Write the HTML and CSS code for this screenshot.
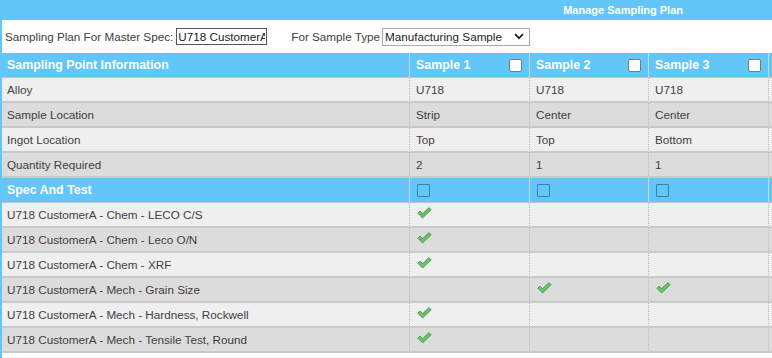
FILE: index.html
```html
<!DOCTYPE html>
<html lang="en">
<head>
    <meta charset="UTF-8">
    <meta name="viewport" content="width=device-width, initial-scale=1.0">
    <title>Manage Sampling Plan</title>
    <link rel="stylesheet" href="styles.css">
</head>
<body>
    <div class="title-bar">Manage Sampling Plan</div>

    <div class="page">
        <div class="filter-row">
            <label for="master-spec">Sampling Plan For Master Spec:</label>
            <input type="text" id="master-spec" value="U718 CustomerA">
            <label for="sample-type" class="type-label">For Sample Type</label>
            <div class="select-box" id="sample-type">
                <span>Manufacturing Sample</span>
                <svg width="10" height="7" viewBox="0 0 10 7"><path d="M1 1.2 L5 5.2 L9 1.2" fill="none" stroke="#222" stroke-width="1.8"/></svg>
            </div>
        </div>

        <table class="grid">
            <tr class="head">
                <th class="first">Sampling Point Information</th>
                <th><div class="head-cell">Sample 1 <span class="box"></span></div></th>
                <th><div class="head-cell">Sample 2 <span class="box"></span></div></th>
                <th><div class="head-cell">Sample 3 <span class="box"></span></div></th>
                <th class="extra"></th>
            </tr>
            <tr class="odd"><td class="first">Alloy</td><td>U718</td><td>U718</td><td>U718</td><td></td></tr>
            <tr class="even"><td class="first">Sample Location</td><td>Strip</td><td>Center</td><td>Center</td><td></td></tr>
            <tr class="odd"><td class="first">Ingot Location</td><td>Top</td><td>Top</td><td>Bottom</td><td></td></tr>
            <tr class="even"><td class="first">Quantity Required</td><td>2</td><td>1</td><td>1</td><td></td></tr>

            <tr class="head">
                <th class="first">Spec And Test</th>
                <th><span class="outline-box"></span></th>
                <th><span class="outline-box"></span></th>
                <th><span class="outline-box"></span></th>
                <th class="extra"></th>
            </tr>
            <tbody id="tests"></tbody>
        </table>
    </div>

    <script>
        const tests = [
            { name: "U718 CustomerA - Chem - LECO C/S", checks: [1, 0, 0] },
            { name: "U718 CustomerA - Chem - Leco O/N", checks: [1, 0, 0] },
            { name: "U718 CustomerA - Chem - XRF", checks: [1, 0, 0] },
            { name: "U718 CustomerA - Mech - Grain Size", checks: [0, 1, 1] },
            { name: "U718 CustomerA - Mech - Hardness, Rockwell", checks: [1, 0, 0] },
            { name: "U718 CustomerA - Mech - Tensile Test, Round", checks: [1, 0, 0] }
        ];

        const tick = '<svg class="tick" width="15" height="12" viewBox="0 0 15 12">' +
            '<path d="M0.8 6.2 L3 4 L5.6 6.6 L12 0.6 L14.2 2.8 L5.6 11 Z" fill="#6cc06a" stroke="#3f9a40" stroke-width="0.8" stroke-linejoin="round"/>' +
            '</svg>';

        const body = document.getElementById('tests');
        tests.forEach((test, index) => {
            const tr = document.createElement('tr');
            tr.className = index % 2 === 0 ? 'odd' : 'even';
            let html = `<td class="first">${test.name}</td>`;
            test.checks.forEach(c => {
                html += `<td>${c ? tick : ''}</td>`;
            });
            html += '<td></td>';
            tr.innerHTML = html;
            body.appendChild(tr);
        });
    </script>
</body>
</html>
```

FILE: styles.css
```css
* {
    margin: 0;
    padding: 0;
    box-sizing: border-box;
}

body {
    font-family: 'Liberation Sans', Arial, sans-serif;
    font-size: 11.7px;
    color: #433d3f;
    background-color: #ffffff;
    overflow: hidden;
}

.title-bar {
    background-color: #62c6f8;
    color: #ffffff;
    font-weight: bold;
    font-size: 11px;
    height: 20px;
    line-height: 20px;
    text-align: right;
    padding-right: 89px;
}

.page {
    border-left: 2px solid #62c6f8;
    background-color: #ffffff;
    min-height: 338px;
}

.filter-row {
    height: 33px;
    display: flex;
    align-items: center;
    padding-left: 3px;
}

.filter-row input {
    font-family: inherit;
    font-size: 11.7px;
    color: #222;
    width: 91px;
    height: 17px;
    margin-left: 3px;
    padding: 0 1px;
    border: 1px solid #555;
}

.type-label {
    margin-left: 24px;
}

.select-box {
    margin-left: 2px;
    width: 148px;
    height: 18px;
    border: 1px solid #a9a9a9;
    display: flex;
    align-items: center;
    justify-content: space-between;
    padding: 0 5px 0 2px;
    color: #222;
}

.grid {
    border-collapse: separate;
    border-spacing: 0;
    table-layout: fixed;
    width: 866px;
}

.grid th, .grid td {
    width: 120px;
    text-align: left;
    padding: 0 6px;
    white-space: nowrap;
    vertical-align: middle;
}

.grid .first {
    width: 407px;
    padding-left: 5px;
}

.grid th:nth-child(3), .grid td:nth-child(3) {
    width: 119px;
}

.grid .extra, .grid td:last-child {
    width: 100px;
}

.head th {
    background-color: #62c6f8;
    color: #ffffff;
    font-size: 12.4px;
    height: 25px;
    border-bottom: 1px solid #c4c4c4;
}

.head th + th {
    border-left: 1px solid #c3dbe7;
}

.head-cell {
    display: flex;
    justify-content: space-between;
    align-items: center;
}

.box {
    width: 13px;
    height: 13px;
    background-color: #ffffff;
    border: 1px solid #7a7a7a;
    border-radius: 2px;
    margin-right: 1px;
}

.outline-box {
    display: block;
    width: 13px;
    height: 13px;
    border: 1.5px solid #3d7fa6;
    border-radius: 1px;
    margin-left: 1px;
}

.grid td {
    height: 25px;
    border-bottom: 2px solid #c9c9c9;
}

.grid td + td {
    border-left: 1px dotted #b9b9b9;
}

.odd td {
    background-color: #efefef;
}

.even td {
    background-color: #dcdcdc;
}

.tick {
    display: block;
    margin-left: 1px;
    margin-top: -4px;
}
```
